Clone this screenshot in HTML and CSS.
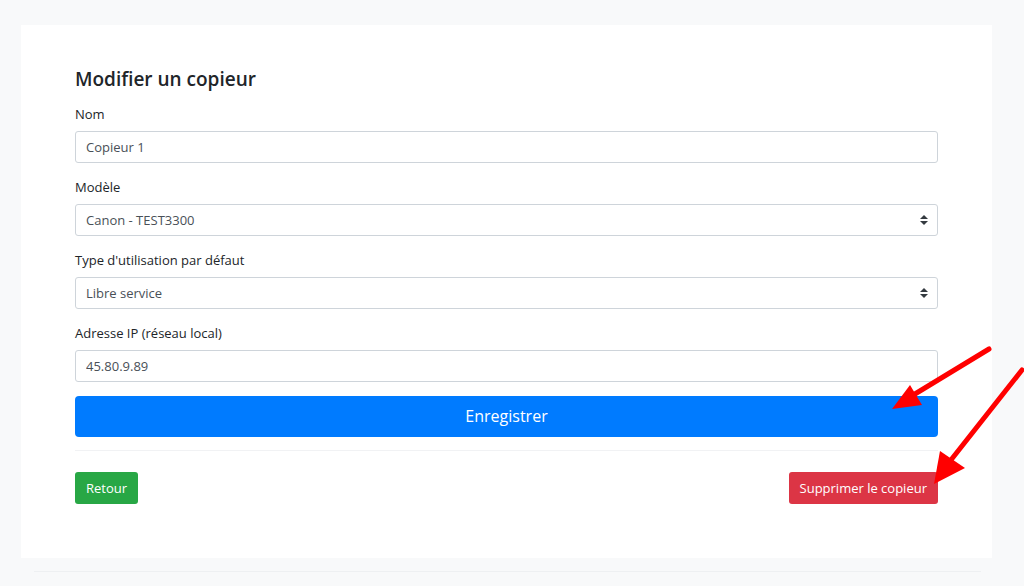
FILE: index.html
```html
<!DOCTYPE html>
<html lang="fr">
<head>
    <meta charset="UTF-8">
    <meta name="viewport" content="width=device-width, initial-scale=1.0">
    <title>Modifier un copieur</title>
    <link rel="stylesheet" href="styles.css">
</head>
<body>
    <div class="card">
        <h4>Modifier un copieur</h4>
        <form action="/copieur/1" method="POST">
            <div class="form-group">
                <label for="nom">Nom</label>
                <input type="text" id="nom" name="nom" value="Copieur 1">
            </div>
            <div class="form-group">
                <label for="modele">Modèle</label>
                <div class="select-wrap">
                    <select id="modele" name="modele">
                        <option>Canon - TEST3300</option>
                    </select>
                    <svg class="caret" width="8" height="10" viewBox="0 0 4 5"><path d="M2 0L0 2h4zm0 5L0 3h4z" fill="#343a40"/></svg>
                </div>
            </div>
            <div class="form-group">
                <label for="type">Type d'utilisation par défaut</label>
                <div class="select-wrap">
                    <select id="type" name="type">
                        <option>Libre service</option>
                    </select>
                    <svg class="caret" width="8" height="10" viewBox="0 0 4 5"><path d="M2 0L0 2h4zm0 5L0 3h4z" fill="#343a40"/></svg>
                </div>
            </div>
            <div class="form-group">
                <label for="ip">Adresse IP (réseau local)</label>
                <input type="text" id="ip" name="ip" value="45.80.9.89">
            </div>
            <button type="submit" class="btn btn-primary btn-lg">Enregistrer</button>
        </form>
        <hr>
        <div class="actions">
            <a href="#" class="btn btn-success">Retour</a>
            <a href="#" class="btn btn-danger">Supprimer le copieur</a>
        </div>
    </div>
    <hr class="footer-line">

    <!-- annotation arrows -->
    <svg class="arrows" width="1024" height="586" viewBox="0 0 1024 586">
        <line x1="989" y1="349" x2="910" y2="397" stroke="#ff0000" stroke-width="5" stroke-linecap="round"/>
        <polygon points="892,409 910,385 922,405" fill="#ff0000"/>
        <line x1="1022" y1="370" x2="947" y2="465" stroke="#ff0000" stroke-width="5" stroke-linecap="round"/>
        <polygon points="934,484 940,451 965,468" fill="#ff0000"/>
    </svg>
</body>
</html>
```

FILE: styles.css
```css
/* page */
body {
    margin: 0;
    padding: 25px 32px 0 21px;
    background-color: #f8f9fa;
    font-family: "Open Sans", Arial, sans-serif;
    font-size: 13px;
    color: #212529;
}
.card {
    background-color: white;
    padding: 40px 54px 54px 54px;
}
h4 {
    margin: 0 0 11px 0;
    font-size: 19px;
    font-weight: 600;
    line-height: 28px;
}
/* form fields */
.form-group {
    margin-bottom: 14px;
}
label {
    display: block;
    margin-bottom: 7px;
    line-height: 20px;
}
input[type="text"], select {
    display: block;
    box-sizing: border-box;
    width: 100%;
    height: 32px;
    padding: 0 10px;
    border: 1px solid #ced4da;
    border-radius: 3px;
    background-color: white;
    color: #495057;
    font-family: inherit;
    font-size: 13px;
}
select {
    appearance: none;
    -webkit-appearance: none;
}
.select-wrap {
    position: relative;
}
.caret {
    position: absolute;
    right: 10px;
    top: 11px;
    pointer-events: none;
}
/* buttons */
.btn {
    display: inline-block;
    box-sizing: border-box;
    border: none;
    border-radius: 3px;
    color: white;
    font-family: inherit;
    font-size: 13px;
    line-height: 32px;
    padding: 0 11px;
    text-decoration: none;
    cursor: pointer;
}
.btn-lg {
    display: block;
    width: 100%;
    height: 41px;
    font-size: 16px;
    line-height: 41px;
    border-radius: 4px;
}
.btn-primary {
    background-color: #007bff;
}
.btn-success {
    background-color: #28a745;
}
.btn-danger {
    background-color: #dc3545;
}
hr {
    border: none;
    border-top: 1px solid #f1f2f4;
    margin: 13px 0 21px 0;
}
.actions {
    display: flex;
    justify-content: space-between;
}
.footer-line {
    margin: 13px 11px 0 13px;
    border-top-color: #eef0f2;
}
.arrows {
    position: absolute;
    left: 0;
    top: 0;
    pointer-events: none;
}
```
